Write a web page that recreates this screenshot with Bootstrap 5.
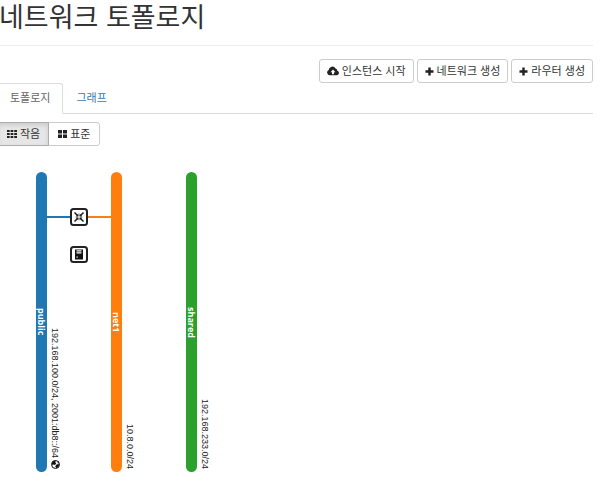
<!DOCTYPE html>
<html lang="ko">
<head>
<meta charset="utf-8">
<meta name="viewport" content="width=device-width, initial-scale=1">
<title>네트워크 토폴로지</title>
<link href="https://cdn.jsdelivr.net/npm/bootstrap@5.3.0/dist/css/bootstrap.min.css" rel="stylesheet">
<style>
body { font-family: "Liberation Sans", "Noto Sans CJK KR", sans-serif; font-size: 11px; color: #333; overflow-x: hidden; }
.page-title { font-family: "Noto Sans CJK KR", sans-serif; font-size: 27px; line-height: 32px; font-weight: 400; color: #333; padding-bottom: 13px; border-bottom: 1px solid #eee; margin: 0 9px 0 -1px; }
.actions { padding: 13px 9px 0 0; gap: 3px; }
.btn-tool { --bs-btn-font-size: 11px; --bs-btn-line-height: 16px; --bs-btn-padding-x: 7px; --bs-btn-padding-y: 3px; --bs-btn-color: #333; --bs-btn-bg: #fff; --bs-btn-border-color: #ccc; --bs-btn-border-radius: 3px; --bs-btn-hover-color: #333; --bs-btn-hover-bg: #e6e6e6; --bs-btn-hover-border-color: #adadad; --bs-btn-active-color: #333; --bs-btn-active-bg: #e6e6e6; --bs-btn-active-border-color: #adadad; display: inline-flex; align-items: center; gap: 3px; white-space: nowrap; height: 24px; }
.btn-tool.active { box-shadow: inset 0 2px 4px rgba(0,0,0,.12); }
.topology-tabs { --bs-nav-tabs-border-color: #ddd; --bs-nav-tabs-border-radius: 3px; --bs-nav-link-padding-x: 12px; --bs-nav-link-padding-y: 6px; --bs-nav-link-color: #337ab7; --bs-nav-tabs-link-active-color: #666; --bs-nav-tabs-link-active-border-color: #ddd #ddd #fff; margin: 0 9px 0 -3px; }
.topology-tabs .nav-link { font-size: 11px; line-height: 17px; }
.sizes { margin: 8px 0 0 -3px; }
.sizes .btn-tool { padding-left: 9px; padding-right: 8px; }
.topology { position: relative; padding: 26px 0 16px 36px; }
.network { width: 75px; height: 300px; gap: 2px; }
.network-bar { width: 11px; border-radius: 6px; color: #fff; font-family: "Open Sans", sans-serif; font-size: 9px; font-weight: 700; line-height: 11px; writing-mode: vertical-rl; }
.network-subnet { writing-mode: vertical-rl; font-size: 9px; line-height: 12px; color: #222; white-space: nowrap; padding-bottom: 3px; gap: 2px; }
.bar-public { background: #1f77b4; }
.bar-net { background: #ff7f0e; }
.bar-shared { background: #2ca02c; }
.topology-nodes { position: absolute; left: 47px; top: 61px; }
</style>
</head>
<body>
<main>
  <h1 class="page-title">네트워크 토폴로지</h1>
  <div class="actions d-flex justify-content-end">
    <button type="button" class="btn btn-tool"><svg width="12" height="10" viewBox="0 0 12 10" aria-hidden="true"><path fill="#222" fill-rule="evenodd" d="M3 9.3A2.8 2.8 0 0 1 1.7 4 3.6 3.6 0 0 1 8.5 2.5 2.4 2.4 0 0 1 10.3 4.8 2.3 2.3 0 0 1 9.6 9.3ZM6 3.6 3.5 6.2H5V8.2H7V6.2H8.5Z"/></svg>인스턴스 시작</button>
    <button type="button" class="btn btn-tool"><svg width="9" height="9" viewBox="0 0 9 9" aria-hidden="true"><path stroke="#222" stroke-width="2.4" d="M4.5 .5v8M.5 4.500h8"/></svg>네트워크 생성</button>
    <button type="button" class="btn btn-tool"><svg width="9" height="9" viewBox="0 0 9 9" aria-hidden="true"><path stroke="#222" stroke-width="2.4" d="M4.5 .5v8M.5 4.500h8"/></svg>라우터 생성</button>
  </div>
  <ul class="nav nav-tabs topology-tabs">
    <li class="nav-item"><a class="nav-link active" aria-current="page" href="#topology">토폴로지</a></li>
    <li class="nav-item"><a class="nav-link" href="#graph">그래프</a></li>
  </ul>
  <div class="btn-group sizes" role="group" aria-label="크기">
    <button type="button" class="btn btn-tool active" aria-pressed="true"><svg width="10" height="8" viewBox="0 0 10 8" aria-hidden="true"><path fill="#222" d="M0 0h2.7v2H0zM3.6 0h2.7v2H3.6zM7.2 0H10v2H7.2zM0 3h2.7v2H0zM3.6 3h2.7v2H3.6zM7.2 3H10v2H7.2zM0 6h2.7v2H0zM3.6 6h2.7v2H3.6zM7.2 6H10v2H7.2z"/></svg>작음</button>
    <button type="button" class="btn btn-tool" aria-pressed="false"><svg width="9" height="8" viewBox="0 0 9 8" aria-hidden="true"><path fill="#222" d="M0 0h4v3.5H0zM5 0h4v3.5H5zM0 4.5h4V8H0zM5 4.5h4V8H5z"/></svg>표준</button>
  </div>
  <section class="topology d-flex" id="topology">
    <div class="network d-flex">
      <div class="network-bar bar-public text-center">public</div>
      <div class="network-subnet d-flex justify-content-end align-items-center"><span>192.168.100.0/24, 2001:db8::/64</span><svg width="9" height="9" viewBox="0 0 9 9" aria-hidden="true"><circle cx="4.5" cy="4.5" r="4" fill="#fff" stroke="#111"/><path fill="#111" d="M.8 3 2.5.8 5 .6 4.3 2.2 5.2 3.5 4 5 2.3 4.6 1.5 5.5ZM5.5 4.6 8.3 4 7.5 6.7 5.3 8.3 4.2 6.5ZM6.5 1l1.7 2-1.4.4z"/></svg></div>
    </div>
    <div class="network d-flex">
      <div class="network-bar bar-net text-center">net1</div>
      <div class="network-subnet d-flex justify-content-end align-items-center"><span>10.8.0.0/24</span></div>
    </div>
    <div class="network d-flex">
      <div class="network-bar bar-shared text-center">shared</div>
      <div class="network-subnet d-flex justify-content-end align-items-center"><span>192.168.233.0/24</span></div>
    </div>
    <svg class="topology-nodes" width="64" height="60" viewBox="0 0 64 60" role="img" aria-label="라우터, 인스턴스">
      <path stroke="#1f77b4" stroke-width="2" d="M0 10h24"/>
      <path stroke="#ff7f0e" stroke-width="2" d="M40 10h24"/>
      <rect x="24" y="2" width="16" height="16" rx="2.5" fill="#fff" stroke="#222" stroke-width="2"/>
      <path stroke="#222" stroke-width="1.5" d="M27.500 5.500 31 9M36.500 5.500 33 9M27.500 14.500 31 11M36.500 14.500 33 11"/>
      <path fill="#222" d="M31.400 6.500V9.400H28.500ZM32.600 6.500V9.400H35.500ZM31.400 13.500V10.600H28.500ZM32.600 13.500V10.600H35.500Z"/>
      <rect x="24" y="40" width="16" height="15" rx="2.500" fill="#fff" stroke="#222" stroke-width="2"/>
      <path fill="#111" d="M28 42.500h8v10h-8z"/>
      <path fill="#fff" d="M29.500 43.300h5v1.200h-5zM29.500 45.200h5v1.300h-5zM29.500 49.500h1.200v1.200h-1.200z"/>
    </svg>
  </section>
</main>
<script src="https://cdn.jsdelivr.net/npm/bootstrap@5.3.0/dist/js/bootstrap.bundle.min.js"></script>
</body>
</html>
